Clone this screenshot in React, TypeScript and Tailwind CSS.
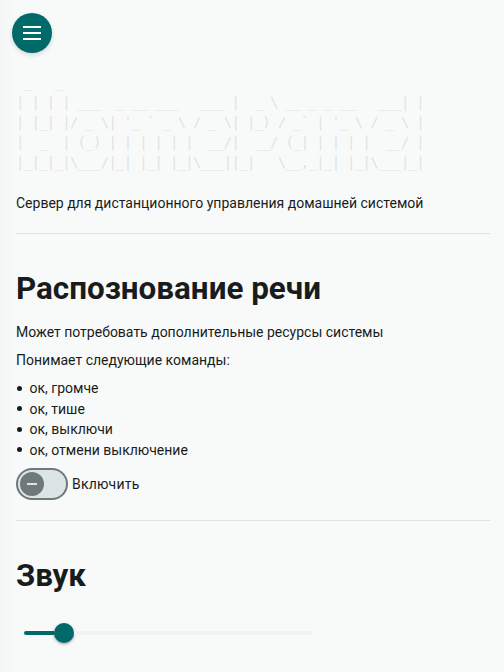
import React from 'react';

const BANNER = [
  " _   _",
  "| | | | ___  _ __ ___   ___ |  _ \\ __ _ _ __   ___| |",
  "| |_| |/ _ \\| '_ ` _ \\ / _ \\| |_) / _` | '_ \\ / _ \\ |",
  "|  _  | (_) | | | | | |  __/|  __/ (_| | | | |  __/ |",
  "|_|_|_|\\___/|_| |_| |_|\\___||_|   \\__,_|_| |_|\\___|_|",
].join('\n');

const COMMANDS = ['ок, громче', 'ок, тише', 'ок, выключи', 'ок, отмени выключение'];

function MenuButton() {
  return (
    <button
      aria-label="Меню"
      className="mt-[13px] -ml-1 flex size-10 flex-col items-center justify-center gap-1 rounded-full bg-[#006a6a] shadow-[0_2px_5px_rgba(0,0,0,0.14)]"
    >
      <span className="h-0.5 w-[18px] bg-white" />
      <span className="h-0.5 w-[18px] bg-white" />
      <span className="h-0.5 w-[18px] bg-white" />
    </button>
  );
}

function Toggle() {
  return (
    <button
      role="switch"
      aria-checked={false}
      aria-label="Включить"
      className="flex h-8 w-[52px] items-center rounded-full border-2 border-[#6f7979] bg-[#dae5e4] pl-0.5"
    >
      <span className="flex size-6 items-center justify-center rounded-full bg-[#6f7979]">
        <span className="h-0.5 w-2.5 bg-[#dae5e4]" />
      </span>
    </button>
  );
}

function Slider() {
  return (
    <div className="ml-2 flex h-5 w-72 items-center">
      <div className="h-1 w-[30px] rounded-l-full bg-[#006a6a]" />
      <div className="size-5 rounded-full bg-[#006a6a] shadow-[0_1px_3px_rgba(0,0,0,0.4)]" />
      <div className="h-1 flex-1 rounded-r-full bg-[#eff3f2]" />
    </div>
  );
}

export default function App() {
  return (
    <main className="h-[672px] overflow-hidden bg-[#f8faf9] bg-[linear-gradient(to_right,#f4f6f5,#f8faf9_14px)] pr-3.5 pl-4 font-['Roboto',sans-serif] text-sm leading-5 text-[#191c1c]">
      <MenuButton />
      <pre className="mt-[19px] h-[100px] font-['DejaVu_Sans_Mono',monospace] text-sm leading-5 tracking-[-0.73px] text-[#dfe3e2]">
        {BANNER}
      </pre>
      <p className="mt-[21px]">Сервер для дистанционного управления домашней системой</p>
      <hr className="mt-5 border-[#dee2e1]" />
      <h1 className="mt-[35px] text-[31.4px] leading-10 font-bold">Распознование речи</h1>
      <p className="mt-[13px]">Может потребовать дополнительные ресурсы системы</p>
      <p className="mt-2">Понимает следующие команды:</p>
      <ul className="mt-2 leading-[20.5px]">
        {COMMANDS.map((command) => (
          <li key={command} className="flex items-center gap-[7.5px]">
            <span className="ml-px size-[5px] rounded-full bg-[#191c1c]" />
            {command}
          </li>
        ))}
      </ul>
      <div className="mt-2 flex items-center gap-1">
        <Toggle />
        <span className="tracking-[0.2px]">Включить</span>
      </div>
      <hr className="mt-5 border-[#dee2e1]" />
      <h1 className="mt-[35px] mb-[27px] text-[31.4px] leading-10 font-bold tracking-[-0.2px]">Звук</h1>
      <Slider />
    </main>
  );
}
